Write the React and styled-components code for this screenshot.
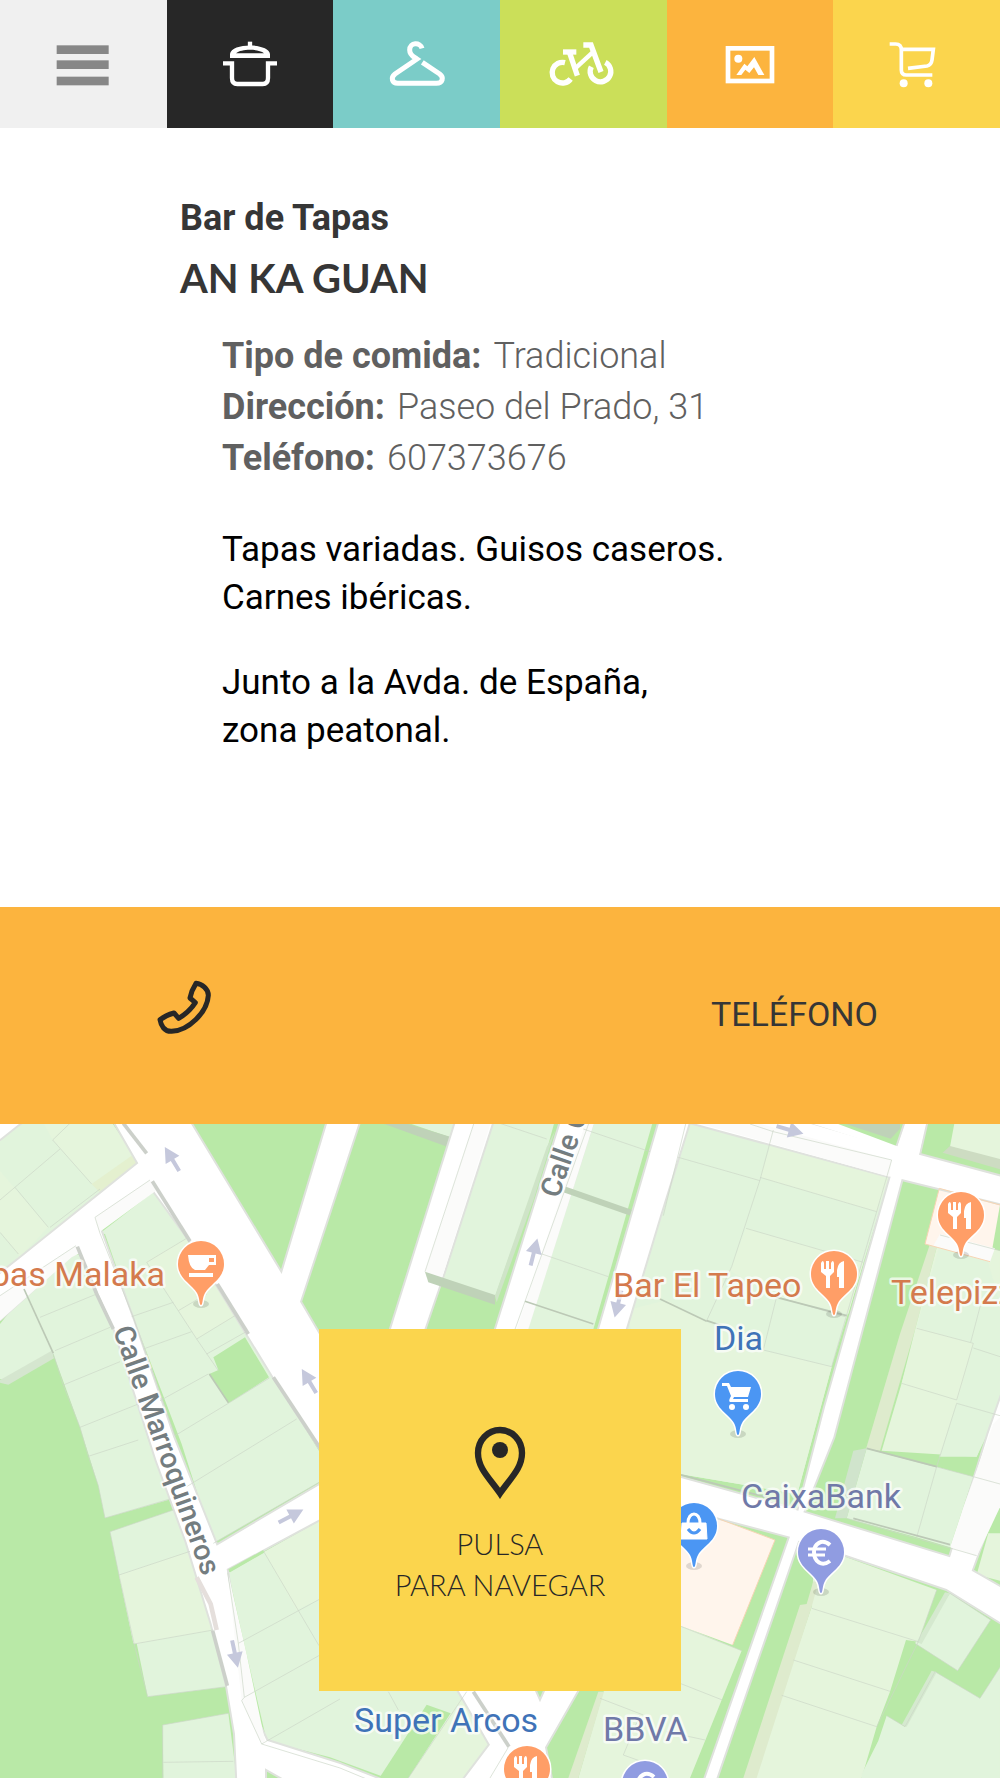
import React from 'react';
import styled, { createGlobalStyle, ThemeProvider } from 'styled-components';

const theme = {
  colors: {
    grey: '#f0f0f0',
    black: '#272727',
    teal: '#7bccc8',
    lime: '#cbdf59',
    orange: '#fcb43e',
    yellow: '#fbd54d',
    heading: '#363636',
    details: '#606060'
  },
  fonts: {
    body: 'Roboto, "Open Sans", sans-serif',
    display: 'Lato, "Open Sans", sans-serif'
  }
};

const GlobalStyle = createGlobalStyle`
  * {
    box-sizing: border-box;
  }

  body {
    margin: 0;
    background-color: #fff;
    font-family: ${theme.fonts.body};
  }
`;

const Nav = styled.nav`
  display: grid;
  grid-template-columns: repeat(6, 1fr);
  height: 128px;
`;

const NavLink = styled.a`
  display: flex;
  align-items: center;
  justify-content: center;
  background-color: ${props => props.theme.colors[props.$color]};

  svg {
    width: 80px;
    height: 50px;
  }
`;

const MenuButton = styled.button`
  display: flex;
  align-items: center;
  justify-content: center;
  padding: 0;
  border: 0;
  cursor: pointer;
  background-color: ${props => props.theme.colors.grey};

  svg {
    width: 80px;
    height: 50px;
  }
`;

const Place = styled.main`
  padding: 66px 18% 152px;
`;

const Category = styled.p`
  margin: 0;
  color: ${props => props.theme.colors.heading};
  font-size: 36px;
  font-weight: 700;
  line-height: 48px;
`;

const Name = styled.h1`
  margin: 8px 0 25px;
  color: ${props => props.theme.colors.heading};
  font-family: ${props => props.theme.fonts.display};
  font-size: 40px;
  font-weight: 700;
  line-height: 56px;
`;

const Indent = styled.div`
  padding-left: 42px;
`;

const Details = styled.dl`
  margin: 0 0 42px;
  color: ${props => props.theme.colors.details};
  font-size: 36px;
  font-weight: 300;
  line-height: 51px;

  div {
    display: flex;
    gap: 12px;
  }

  dt {
    font-weight: 700;
  }

  dd {
    margin: 0;
  }
`;

const Text = styled.p`
  margin: 0 0 37px;
  color: #000;
  font-size: 35px;
  line-height: 48px;

  &:last-child {
    margin-bottom: 0;
  }
`;

const PhoneBar = styled.a`
  display: flex;
  align-items: center;
  justify-content: space-between;
  height: 217px;
  padding: 0 122px 4px 157px;
  background-color: ${props => props.theme.colors.orange};
  color: ${props => props.theme.colors.heading};
  font-size: 34px;
  text-decoration: none;

  svg {
    width: 56px;
    height: 72px;
  }
`;

const MapSection = styled.section`
  position: relative;
  display: flex;
  justify-content: center;
  align-items: flex-start;
  min-height: 654px;
  padding: 205px 0 87px;
  overflow: hidden;
`;

const MapCanvas = styled.svg`
  position: absolute;
  top: 0;
  left: 0;
  width: 100%;
  height: 100%;
  font-family: Roboto, sans-serif;
`;

const MapLabel = styled.text`
  fill: ${props => props.$color};
  font-size: 34px;
  stroke: #fff;
  stroke-opacity: 0.7;
  stroke-width: 5px;
  stroke-linejoin: round;
  paint-order: stroke;
`;

const StreetLabel = styled.text`
  fill: #747d80;
  font-size: 29px;
  font-weight: 500;
  stroke: #fff;
  stroke-opacity: 0.7;
  stroke-width: 4px;
  stroke-linejoin: round;
  paint-order: stroke;
`;

const NavigateLink = styled.a`
  position: relative;
  display: flex;
  flex-direction: column;
  align-items: center;
  gap: 24px;
  width: 362px;
  height: 362px;
  padding-top: 97px;
  background-color: ${props => props.theme.colors.yellow};
  color: ${props => props.theme.colors.black};
  font-family: ${props => props.theme.fonts.display};
  font-size: 29px;
  font-weight: 300;
  line-height: 41px;
  text-align: center;
  text-decoration: none;

  svg {
    width: 52px;
    height: 73px;
  }
`;

const MenuIcon = () => (
  <svg viewBox="130 117 240 150" fill="#878787" aria-hidden="true">
    <rect x="171" y="136" width="156" height="26" />
    <rect x="171" y="181" width="156" height="26" />
    <rect x="171" y="230" width="156" height="26" />
  </svg>
);

const PotIcon = () => (
  <svg viewBox="630 117 240 150" aria-hidden="true">
    <g fill="none" stroke="#fff" strokeWidth="13">
      <path d="M669 190H696V234Q696 252 712 252H788Q804 252 804 234V190H831" />
      <path d="M750 125V144" />
    </g>
    <path
      fill="#fff"
      fillRule="evenodd"
      d="M690 174V162C694 128 806 128 810 162V174ZM708 160H792C776 146 724 146 708 160Z"
    />
  </svg>
);

const HangerIcon = () => (
  <svg viewBox="1130 117 240 150" aria-hidden="true">
    <g fill="none" stroke="#fff" strokeWidth="15">
      <path d="M1265 145C1260 126 1228 126 1228 150C1228 167 1240 170 1250 177L1184 222C1170 233 1175 250 1192 250H1308C1327 250 1332 233 1318 222L1266 187" />
    </g>
  </svg>
);

const BikeIcon = () => (
  <svg viewBox="130 117 240 150" aria-hidden="true">
    <g fill="none" stroke="#fff" strokeWidth="16">
      <path d="M196 188A31 31 0 1 0 213 237" />
      <path d="M317 187A31 31 0 1 1 275 200" />
      <path d="M190 156H230" />
      <path d="M209 156L233 227" />
      <path d="M251 135H274L304 216" />
      <path d="M226 206L279 157" strokeWidth="13" />
    </g>
  </svg>
);

const PictureIcon = () => (
  <svg viewBox="630 117 240 150" fill="#fff" aria-hidden="true">
    <rect
      x="684"
      y="145"
      width="132"
      height="98"
      fill="none"
      stroke="#fff"
      strokeWidth="14"
    />
    <circle cx="715" cy="176" r="12" />
    <path d="M709 225L733 191L742 199L763 171L793 225H775L762 202L748 219L736 209L724 225Z" />
  </svg>
);

const CartIcon = () => (
  <svg viewBox="1130 117 240 150" aria-hidden="true">
    <g fill="none" stroke="#fff" strokeWidth="11">
      <path d="M1168 132H1186Q1203 132 1203 150V210Q1203 225 1218 225H1296" />
      <path d="M1203 148H1299L1295 180Q1293 195 1280 198L1223 205" />
    </g>
    <g fill="#fff">
      <circle cx="1210" cy="250" r="12" />
      <circle cx="1284" cy="250" r="12" />
    </g>
  </svg>
);

const PhoneIcon = () => (
  <svg viewBox="36 22 168 216" aria-hidden="true">
    <path
      d="M153 38C171 40 190 54 190 74C187 125 130 180 80 182C59 183 48 166 45 147Q62 134 87 127L101 143Q132 125 151 96L135 82Q139 60 153 38Z"
      fill="none"
      stroke="#272727"
      strokeWidth="15"
      strokeLinejoin="round"
    />
  </svg>
);

const PinIcon = () => (
  <svg viewBox="430 -45 156 219" aria-hidden="true">
    <path
      d="M508 157C480 115 442 84 442 36A66 69 0 0 1 574 36C574 84 536 115 508 157Z"
      fill="none"
      stroke="#272727"
      strokeWidth="19"
    />
    <circle cx="508" cy="27" r="24" fill="#272727" />
  </svg>
);

const SECTIONS = [
  { label: 'Restaurantes', color: 'black', Icon: PotIcon },
  { label: 'Moda', color: 'teal', Icon: HangerIcon },
  { label: 'Ocio', color: 'lime', Icon: BikeIcon },
  { label: 'Cultura', color: 'orange', Icon: PictureIcon },
  { label: 'Compras', color: 'yellow', Icon: CartIcon }
];

// Map geometry, three units to the pixel
const MINT = '#e1f4dc';
const LEAF = '#e5f5dc';
const PARK = '#b9e9a7';
const PEACH = '#fff5ec';
const WALL = '#bfd2b8';
const SAGE = '#deebcd';

const BLOCKS = [
  [MINT, '0,50 70,-12 330,-12 415,115 300,205 60,400 0,450'],
  [LEAF, '125,-12 330,-12 415,115 275,180 158,48'],
  [LEAF, '0,140 145,310 60,400 0,325'],
  ['#e4f0cf', '275,180 395,95 415,118 300,205'],
  [MINT, '0,600 80,500 215,395 245,390 345,620 445,948 515,1125 315,1182 295,1085 240,910 160,690 20,770 0,765'],
  ['#d5e6cf', '0,768 155,680 162,703 25,782 0,776'],
  [MINT, '330,1223 520,1158 570,1278 640,1518 680,1688 443,1718 410,1558 400,1558 357,1353'],
  [LEAF, '357,1353 570,1282 640,1518 402,1560'],
  [MINT, '488,1803 685,1768 710,1962 490,1962'],
  [MINT, '300,328 465,200 560,343 740,628 820,760 1000,1050 640,1258 545,960 400,580'],
  [LEAF, '440,412 560,343 708,575 590,645'],
  [PARK, '298,328 315,330 360,460'],
  [PARK, '640,700 735,640 807,760 685,838 628,750 655,738'],
  [MINT, '685,1346 960,1190 1300,1400 1380,1703 1470,1858 1390,1962 1160,1962 990,1900 800,1850 740,1590'],
  [LEAF, '792,1284 960,1190 960,1425 890,1458'],
  [LEAF, '1350,1768 1400,1703 1470,1858 1390,1962 1225,1962'],
  [PARK, '1280,1742 1352,1768 1225,1962 1138,1962'],
  [MINT, '1200,-12 1365,-12 1350,40'],
  [WALL, '1120,-12 1185,-12 1350,38 1352,72'],
  [MINT, '1460,-12 1665,-12 1640,80 1485,518 1310,465'],
  ['#cfe4c8', '1640,70 1665,20 1600,230 1490,535 1485,515'],
  [MINT, '1780,-12 1960,-12 1780,616 1580,616'],
  [MINT, '2060,-12 2670,158 2590,418 2495,728 2392,1110 2040,1050 1875,616 1980,275'],
  [LEAF, '2320,40 2670,158 2630,263 2280,160'],
  [LEAF, '2238,313 2590,415 2545,570 2330,520 2190,440'],
  [LEAF, '1875,560 2000,528 2120,595 2290,680 2495,728 2392,1110 2040,1050'],
  [LEAF, '2865,-12 3000,-12 3000,108 2850,68'],
  ['#cddcc2', '2828,86 2850,66 3000,105 3000,136'],
  [SAGE, '2790,360 2820,333 2745,618 2640,980 2598,975 2700,630'],
  [LEAF, '2820,333 3000,380 3000,820 2930,998 2645,980 2705,778 2745,618'],
  [MINT, '2750,610 2820,360 2960,400 3000,540 3000,850 2930,998 2818,998 2870,838 2920,660'],
  [LEAF, '2752,613 2920,658 2870,828 2705,778'],
  [MINT, '2600,973 2810,1028 2920,1058 2850,1270 2745,1238 2540,1183'],
  ['#d0e4cc', '2560,980 2600,973 2540,1183 2505,1183'],
  [PEACH, '2818,193 3000,243 2970,413 2775,360'],
  [LEAF, '1810,1703 2040,1503 2225,1580 2070,1962 1735,1962 1700,1850'],
  [PARK, '1735,1703 1810,1703 1735,1962 1655,1962 1630,1870'],
  [SAGE, '1795,1703 1812,1703 1735,1962 1705,1962'],
  [PEACH, '2000,1150 2160,1186 2325,1248 2198,1563 2000,1490'],
  [LEAF, '2440,1350 2535,1298 2810,1398 2755,1553 2718,1548 2670,1703 2630,1808 2585,1962 2260,1962 2435,1448'],
  [SAGE, '2400,1443 2420,1440 2440,1372 2455,1375 2435,1448 2270,1962 2230,1962'],
  [MINT, '2850,1408 2972,1488 2873,1640 2745,1558'],
  ['#d5e9cf', '2835,1405 2850,1408 2765,1560 2750,1555'],
  [MINT, '2805,1643 2940,1723 3000,1630 3000,1962 2585,1962 2585,1950 2635,1850 2660,1775 2715,1808'],
  ['#d5e9cf', '2795,1640 2810,1645 2720,1808 2705,1803'],
  [LEAF, '2965,1228 3000,1228 3000,1370 2930,1352']
];

const ROADS = [
  '0,45 -20,-20 85,-20 50,5',
  '330,-30 555,-30 845,450 990,-30 1085,-30 900,533 1150,960 1150,1200 957,968 820,758 570,350 450,185 300,315 400,590 520,940 650,1265 970,1076 970,1180 680,1335 715,1550 740,1723 800,1850 1020,1920 1160,1975 870,1975 795,1933 795,1975 712,1975 705,1830 680,1680 635,1500 560,1255 470,1010 345,620 238,380 210,395 0,585 0,450 60,403 415,118',
  '1375,-30 1485,-30 1330,450 1265,640 1165,640',
  '1690,-30 1785,-30 1570,640 1480,640',
  '1985,-30 2075,-30 1980,275 1870,640 1790,640',
  '2060,-30 2330,-30 2690,75 2725,-30 2785,-30 2757,92 3010,160 3010,240 2705,165 2500,940 2410,1165 2850,1300 2965,930 3010,800 3010,1080 2915,1340 3010,1395 3010,1500 2840,1395 2530,1290 2395,1250 2145,1975 2112,1975 2370,1238 2000,1140 2000,1050 2395,1160 2475,850 2672,158 2060,-8',
  '1370,1690 1600,1690 1620,1735 1640,1690 1738,1690 1635,1870 1655,1975 1385,1975 1470,1862'
];

const FACADES = [
  '285,280 450,168 468,200 298,325',
  '0,515 228,365 245,385 215,400 0,590',
  '1425,-12 1475,-12 1320,480 1285,475 1275,443',
  '1760,-12 1785,-12 1585,616 1550,616',
  '2060,-12 2240,-12 2675,108 2668,158',
  '685,1350 740,1590 795,1850 785,1860 725,1730 705,1550',
  '2890,1150 2980,900 3000,880 3000,1150 2930,1298 2850,1270',
  '2820,330 2985,373 2970,413 2800,365'
];

const WALLS = [
  'M370,-2L440,88',
  'M457,172L570,352',
  'M652,480L745,630',
  'M820,760L962,975',
  'M232,368L290,510L340,615',
  'M638,1520L682,1685',
  'M1420,1703L1527,1868'
];

const EDGES = [
  'M0,228L180,75M45,190L145,310M158,48L275,180M158,48L220,-12M0,325L55,390M150,310L300,195',
  'M440,415L560,343M440,415L590,645L655,740M395,578L520,535M430,675L575,623M535,560L620,510M590,645L705,575M620,690L735,625M480,830L625,750M525,935L685,838L808,762M560,1088L690,1008L890,885',
  'M120,580L290,510M165,680L330,610M190,783L360,713M240,910L415,840M265,997L415,948',
  'M160,690L190,783L240,910L265,997L295,1085L315,1182L510,1125M330,1223L520,1158M357,1353L570,1282M402,1560L640,1518M443,1718L680,1688M330,1223L357,1353L402,1558L443,1718',
  'M488,1803L685,1768M490,1915L700,1912M488,1803V1962',
  'M285,280L450,168M285,280L300,328L400,580L525,935M0,515L228,365',
  'M792,1284L957,1565M715,1558L960,1425M733,1720L960,1593M785,1860L1020,1725M640,1258L957,1075M683,1346L715,1558L733,1720L725,1730L785,1860L1020,1932L1160,1990',
  'M1165,1703L1195,1758M1225,1962L1400,1703M1470,1962L1525,1870',
  'M1425,-12L1275,443M1500,-2L1640,45M1750,15L1950,83M1770,-12L1545,616M1620,388L1825,458',
  'M2035,100L2280,170M2280,160L2630,263M2320,18L2280,168L2195,428L2120,590M2238,313L2590,415M2330,518L2535,578M2330,518L2290,678L2495,728M2250,0L2320,23L2675,108L2495,728M1990,275L2060,-12',
  'M2750,613L2920,658L2870,828L2705,778M2920,672L3000,698M2870,838L3000,875M2870,838L2810,1028L2750,1240M2600,973L2920,1058L3000,1080M2540,1183L2930,1295M2820,333L3000,380M2945,530L2912,655',
  'M2435,1453L2755,1553M2380,1608L2670,1702M2345,1714L2630,1808L2755,1553L2810,1398M2745,1558L2873,1640L2972,1488L2850,1408M2000,1490L2225,1580M2040,1678L2167,1728M2000,1823L2115,1848M1800,1723L1930,1773M1920,1773L1870,1893L1940,1918',
  'M2805,1643L2940,1723L3000,1630M2660,1775L2715,1808L2805,1643'
];

const DARK_EDGES = [
  'M72,495L160,688',
  'M628,750L685,836',
  'M1575,532L1780,600',
  'M1980,525L2120,592',
  'M2120,590L2180,610M2330,520L2540,575',
  'M2600,973L2810,1028M2560,1183L2850,1262M2040,1052L2300,1120'
];

const ONE_WAY = [
  { x: 172, y: 35, angle: -31 },
  { x: 309, y: 257, angle: -31 },
  { x: 291, y: 392, angle: 62 },
  { x: 235, y: 530, angle: 168 },
  { x: 534, y: 128, angle: 14 },
  { x: 618, y: 180, angle: 194 },
  { x: 790, y: 6, angle: 106 }
];

const POIS = [
  { x: 201, y: 140, color: '#ff9e67', kind: 'cafe' },
  { x: 834, y: 150, color: '#ff9e67', kind: 'food' },
  { x: 961, y: 91, color: '#ff9e67', kind: 'food' },
  { x: 527, y: 645, color: '#ff9e67', kind: 'food' },
  { x: 738, y: 270, color: '#4b96f3', kind: 'cart' },
  { x: 694, y: 402, color: '#4b96f3', kind: 'bag' },
  { x: 821, y: 428, color: '#909ce1', kind: 'bank' },
  { x: 645, y: 660, color: '#909ce1', kind: 'bank' }
];

const GLYPHS = {
  cafe: (
    <g fill="#fff">
      <path
        fillRule="evenodd"
        d="M-13-9H15V1H8L4 6H-6Q-12 4-13-9ZM8-6V-2H13V-6Z"
      />
      <rect x="-12" y="9" width="24" height="4" />
    </g>
  ),
  food: (
    <g fill="#fff">
      <path d="M-13-11Q-11-15-10-11V-5H-8V-13H-5V-5H-3V-11Q-1-15 0-11V-2L-4 2V14H-8V2L-13-2Z" />
      <path d="M10-13V14H5V3H3V-4Q4-12 10-13Z" />
    </g>
  ),
  cart: (
    <g fill="#fff">
      <path d="M-16-11H-9L-7-7H13L10 3H-4L-5 5H10V8H-8Q-10 7-7 2L-11-8H-16Z" />
      <circle cx="-6" cy="13" r="3" />
      <circle cx="8" cy="13" r="3" />
    </g>
  ),
  bag: (
    <g fill="none" stroke="#fff">
      <path d="M-12-3H12L13 13H-13Z" fill="#fff" strokeWidth="1" />
      <path d="M-6-3C-6-15 6-15 6-3" strokeWidth="3" />
      <path d="M-6 3Q0 11 6 3" stroke="#4b96f3" strokeWidth="3" />
    </g>
  ),
  bank: (
    <g fill="none" stroke="#fff" strokeWidth="4">
      <path d="M9-7C1-14-7-8-7 0C-7 10 1 15 9 9" />
      <path d="M-13-3H5M-13 3H4" strokeWidth="3" />
    </g>
  )
};

const LABELS = [
  { x: 165, y: 162, color: '#d47a4d', text: 'Tapas Malaka', anchor: 'end' },
  { x: 613, y: 173, color: '#d47a4d', text: 'Bar El Tapeo' },
  { x: 891, y: 180, color: '#d47a4d', text: 'Telepizza' },
  { x: 714, y: 226, color: '#3f73b8', text: 'Dia' },
  { x: 741, y: 384, color: '#7079a8', text: 'CaixaBank' },
  { x: 354, y: 608, color: '#3f73b8', text: 'Super Arcos' },
  { x: 603, y: 617, color: '#7079a8', text: 'BBVA' }
];

const Poi = ({ x, y, color, kind }) => (
  <g transform={`translate(${x} ${y})`}>
    <ellipse cx="0" cy="40" rx="8" ry="4" fill="#000" opacity="0.12" />
    <path
      d="M0 41C-2 41-1 34-4 29C-9 20-23 15-23 0A23 23 0 0 1 23 0C23 15 9 20 4 29C1 34 2 41 0 41Z"
      fill={color}
      stroke="#fff"
      strokeWidth="3"
      paintOrder="stroke"
    />
    {GLYPHS[kind]}
  </g>
);

const StreetMap = () => (
  <MapCanvas
    viewBox="0 0 1000 654"
    preserveAspectRatio="xMidYMin slice"
    role="img"
    aria-label="Mapa de la zona"
  >
    <rect width="1000" height="654" fill={PARK} />

    <g transform="scale(0.33333)">
      {BLOCKS.map(([fill, points]) => (
        <polygon key={points} fill={fill} points={points} />
      ))}

      {ROADS.map(points => (
        <polygon
          key={points}
          points={points}
          fill="#fff"
          stroke="#dfe2dd"
          strokeWidth="12"
          strokeLinejoin="round"
          paintOrder="stroke"
        />
      ))}

      {/* covers the kerb where two roads meet */}
      <polygon points="2340,-20 2690,75 2725,-20 2780,-20 2755,100 2700,165 2640,140" fill="#fff" />
      <polygon points="2345,-30 2435,-30 2700,70 2685,78" fill="#fff" />

      {FACADES.map(points => (
        <polygon key={points} points={points} fill="#fbfbfa" />
      ))}

      <polygon points="1275,443 1485,513 1485,542 1285,475" fill={WALL} />
      <path d="M1695,197L1892,266" stroke={WALL} strokeWidth="18" />
      <polygon points="2550,-12 2700,-12 2700,14 2672,44 2500,-12" fill={WALL} />
      <polygon points="685,1336 790,1278 792,1286 690,1345" fill={PARK} />
      <path d="M590,1360L632,1440L650,1518" fill="none" stroke="#e5dfdc" strokeWidth="14" />

      <g fill="none" stroke="#ccd0ca" strokeWidth="11">
        {WALLS.map(d => (
          <path key={d} d={d} />
        ))}
      </g>

      <g fill="none" stroke="#cbd6c7" strokeWidth="2">
        {EDGES.map(d => (
          <path key={d} d={d} />
        ))}
      </g>

      <g fill="none" stroke="#bcc9b6" strokeWidth="5">
        {DARK_EDGES.map(d => (
          <path key={d} d={d} />
        ))}
      </g>

      <path
        d="M2818,193L3000,243M2970,413L2775,360L2818,193M2160,1186L2325,1248L2198,1563"
        fill="none"
        stroke="#f6d5b4"
        strokeWidth="3"
      />
    </g>

    {ONE_WAY.map(({ x, y, angle }) => (
      <path
        key={`${x}-${y}`}
        transform={`translate(${x} ${y}) rotate(${angle})`}
        d="M0-14L8 1H2V14H-2V1H-8Z"
        fill="#c5c8dc"
      />
    ))}

    <StreetLabel
      x="0"
      y="10"
      textAnchor="middle"
      transform="translate(167 326) rotate(70)"
    >
      Calle Marroquineros
    </StreetLabel>
    <StreetLabel x="0" y="10" transform="translate(549 72) rotate(-71)">
      Calle C
    </StreetLabel>

    {POIS.map(poi => (
      <Poi key={`${poi.x}-${poi.y}`} {...poi} />
    ))}

    {LABELS.map(({ x, y, color, text, anchor }) => (
      <MapLabel key={text} x={x} y={y} $color={color} textAnchor={anchor}>
        {text}
      </MapLabel>
    ))}
  </MapCanvas>
);

const App = () => {
  return (
    <ThemeProvider theme={theme}>
      <GlobalStyle />

      <Nav>
        <MenuButton type="button" aria-label="Menú">
          <MenuIcon />
        </MenuButton>
        {SECTIONS.map(({ label, color, Icon }) => (
          <NavLink key={label} href="#" $color={color} aria-label={label}>
            <Icon />
          </NavLink>
        ))}
      </Nav>

      <Place>
        <Category>Bar de Tapas</Category>
        <Name>AN KA GUAN</Name>
        <Indent>
          <Details>
            <div>
              <dt>Tipo de comida:</dt>
              <dd>Tradicional</dd>
            </div>
            <div>
              <dt>Dirección:</dt>
              <dd>Paseo del Prado, 31</dd>
            </div>
            <div>
              <dt>Teléfono:</dt>
              <dd>607373676</dd>
            </div>
          </Details>
          <Text>
            Tapas variadas. Guisos caseros.
            <br />
            Carnes ibéricas.
          </Text>
          <Text>
            Junto a la Avda. de España,
            <br />
            zona peatonal.
          </Text>
        </Indent>
      </Place>

      <PhoneBar href="tel:607373676">
        <PhoneIcon />
        TELÉFONO
      </PhoneBar>

      <MapSection>
        <StreetMap />
        <NavigateLink href="#">
          <PinIcon />
          <span>
            PULSA
            <br />
            PARA NAVEGAR
          </span>
        </NavigateLink>
      </MapSection>
    </ThemeProvider>
  );
};

export default App;
